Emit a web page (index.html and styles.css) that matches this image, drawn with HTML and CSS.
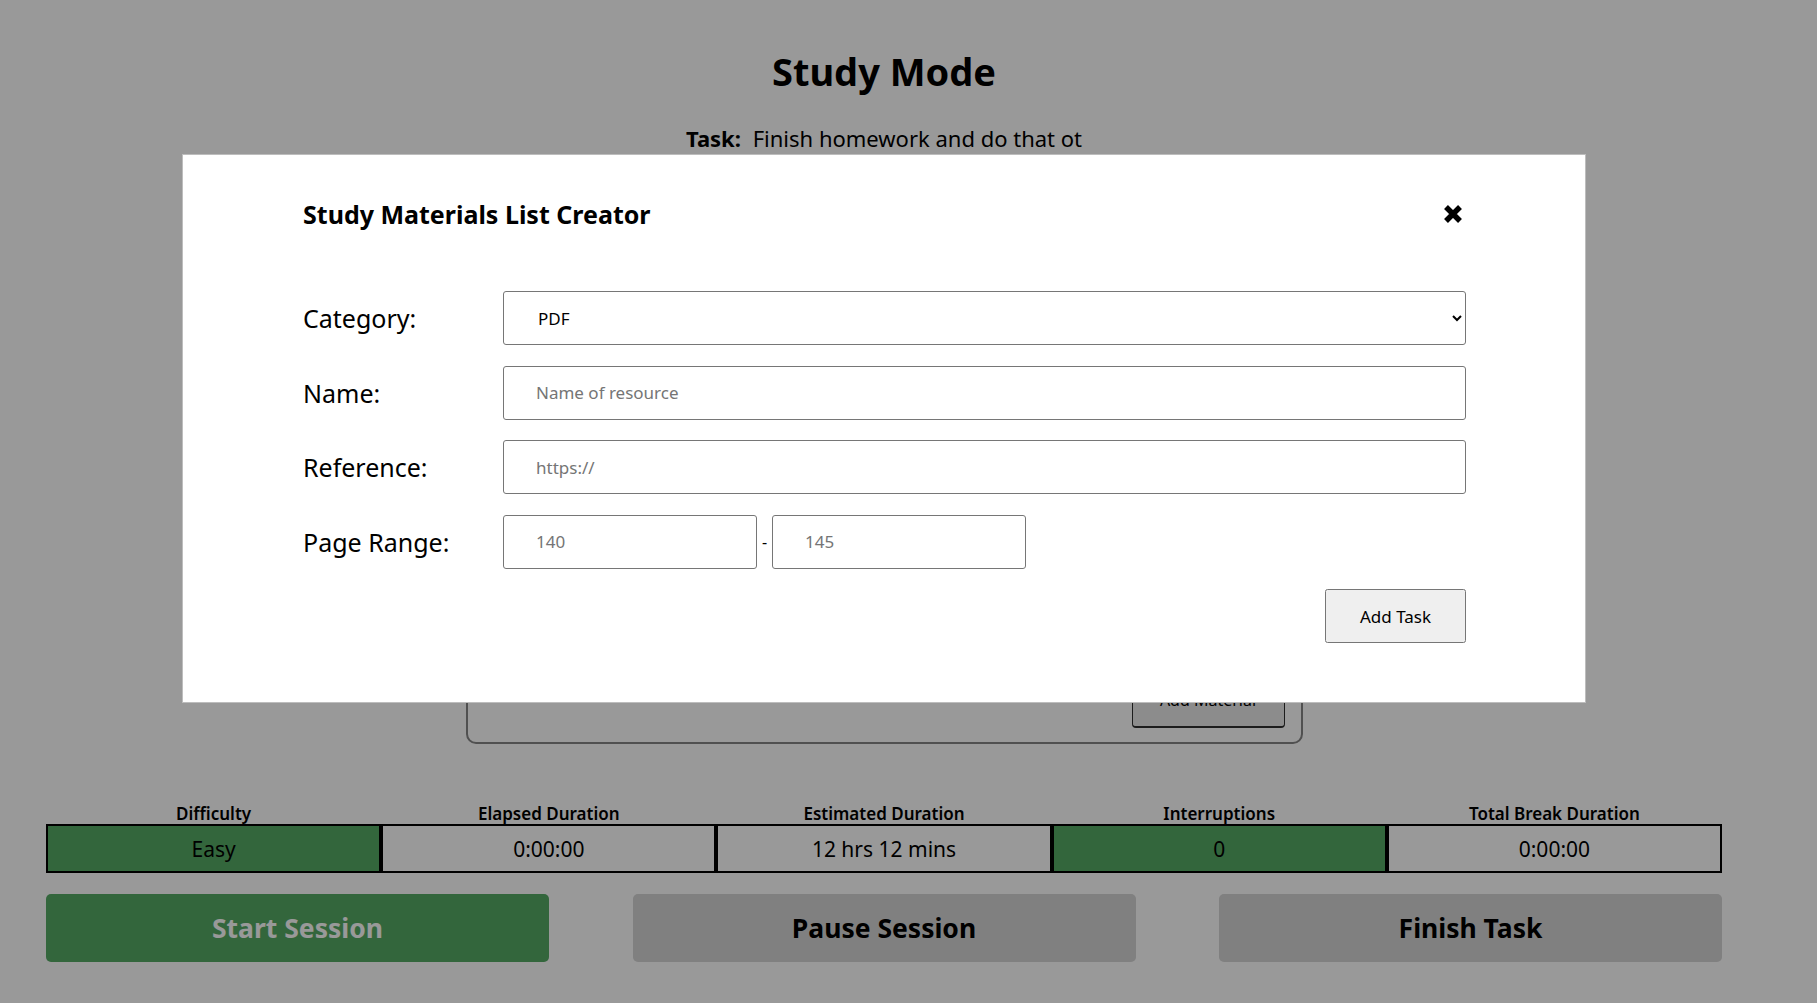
FILE: index.html
```html
<!DOCTYPE html>
<html lang="en">
<head>
<meta charset="utf-8">
<title>Study Mode</title>
<link rel="stylesheet" href="styles.css">
</head>
<body>
<div class="page">
  <h1 class="title">Study Mode</h1>
  <p class="task"><strong>Task:</strong> Finish homework and do that ot</p>
  <section class="materials">
    <div class="materials-actions">
      <button class="add-material" type="button">Add Material</button>
    </div>
  </section>
  <div class="stats">
    <div class="stat">
      <div class="stat-label">Difficulty</div>
      <div class="stat-value green">Easy</div>
    </div>
    <div class="stat">
      <div class="stat-label">Elapsed Duration</div>
      <div class="stat-value">0:00:00</div>
    </div>
    <div class="stat">
      <div class="stat-label">Estimated Duration</div>
      <div class="stat-value">12 hrs 12 mins</div>
    </div>
    <div class="stat">
      <div class="stat-label">Interruptions</div>
      <div class="stat-value green">0</div>
    </div>
    <div class="stat">
      <div class="stat-label">Total Break Duration</div>
      <div class="stat-value">0:00:00</div>
    </div>
  </div>
  <div class="actions">
    <button class="action start" type="button">Start Session</button>
    <button class="action" type="button">Pause Session</button>
    <button class="action" type="button">Finish Task</button>
  </div>
</div>

<div class="overlay"></div>
<div class="modal">
  <div class="modal-header">
    <h2 class="modal-title">Study Materials List Creator</h2>
    <button class="close" type="button" aria-label="Close">
      <svg width="20" height="20" viewBox="0 0 20 20"><path d="M3 3 L17 17 M17 3 L3 17" stroke="#000" stroke-width="5.5" fill="none"/></svg>
    </button>
  </div>
  <form class="modal-form">
    <div class="row">
      <label class="row-label">Category:</label>
      <select class="field">
        <option>PDF</option>
        <option>Video</option>
        <option>Website</option>
        <option>Book</option>
      </select>
    </div>
    <div class="row">
      <label class="row-label">Name:</label>
      <input class="field" type="text" placeholder="Name of resource">
    </div>
    <div class="row">
      <label class="row-label">Reference:</label>
      <input class="field" type="text" placeholder="https://">
    </div>
    <div class="row">
      <label class="row-label">Page Range:</label>
      <div class="range">
        <input class="field page" type="text" placeholder="140">
        <span class="dash">-</span>
        <input class="field page" type="text" placeholder="145">
      </div>
    </div>
    <div class="row submit-row">
      <button class="submit" type="button">Add Task</button>
    </div>
  </form>
</div>
</body>
</html>
```
FILE: styles.css
```css
html, body {
  margin: 0;
  padding: 0;
  background: #ffffff;
  font-family: "Noto Sans", "DejaVu Sans", sans-serif;
  color: #000;
}

.page {
  width: 1676px;
  margin-left: 46px;
}

.title {
  margin: 48px 0 0;
  font-size: 38px;
  line-height: 46px;
  font-weight: 700;
  text-align: center;
}

.task {
  margin: 30px 0 0;
  font-size: 22px;
  line-height: 28px;
  text-align: center;
}

.task strong {
  margin-right: 6px;
}

.materials {
  box-sizing: border-box;
  width: 837px;
  height: 572px;
  margin: 20px auto 0;
  border: 2px solid #858585;
  border-radius: 10px;
  padding: 14px 16px;
  display: flex;
  flex-direction: column;
  justify-content: flex-end;
}

.materials-actions {
  display: flex;
  justify-content: flex-end;
}

.add-material {
  box-sizing: border-box;
  width: 153px;
  height: 56px;
  background: #e9e9e9;
  border: 1px solid #303030;
  border-bottom-width: 2px;
  border-radius: 4px;
  font-family: inherit;
  font-size: 16px;
  color: #000;
}

.stats {
  display: grid;
  grid-template-columns: repeat(5, 1fr);
  margin-top: 60px;
}

.stat-label {
  font-size: 17px;
  line-height: 20px;
  font-weight: 600;
  text-align: center;
}

.stat-value {
  box-sizing: border-box;
  height: 49px;
  border: 2px solid #000;
  display: flex;
  align-items: center;
  justify-content: center;
  font-size: 21px;
}

.stat-value.green {
  background: #55aa65;
}

.actions {
  display: flex;
  justify-content: space-between;
  margin-top: 21px;
}

.action {
  width: 503px;
  height: 68px;
  border: none;
  border-radius: 5px;
  background: #d5d5d5;
  font-family: inherit;
  font-size: 26.5px;
  font-weight: 700;
  color: #000;
}

.action.start {
  background: #55aa65;
  color: #fff;
}

.overlay {
  position: fixed;
  inset: 0;
  background: rgba(0, 0, 0, 0.4);
}

.modal {
  position: fixed;
  left: 182px;
  top: 154px;
  box-sizing: border-box;
  width: 1404px;
  height: 549px;
  background: #fff;
  border: 1px solid #bdbdbd;
  padding: 44px 119px 0 120px;
}

.modal-header {
  display: flex;
  align-items: center;
  justify-content: space-between;
  height: 30px;
}

.modal-title {
  margin: 0;
  font-size: 25px;
  line-height: 30px;
  font-weight: 700;
}

.close {
  background: none;
  border: none;
  padding: 0;
  margin-right: 3px;
  display: flex;
}

.modal-form {
  margin-top: 62px;
  display: flex;
  flex-direction: column;
  gap: 20.5px;
}

.row {
  display: flex;
  align-items: center;
}

.row-label {
  width: 200px;
  flex: none;
  font-size: 25px;
}

.field {
  box-sizing: border-box;
  flex: 1 1 auto;
  min-width: 0;
  height: 54px;
  margin: 0;
  padding: 0 32px;
  font-family: inherit;
  font-size: 17px;
  color: #000;
  background: #fff;
  border: 1px solid #767676;
  border-radius: 3px;
}

.field::placeholder {
  color: #757575;
}

select.field {
  padding-left: 30px;
}

.range {
  display: flex;
  align-items: center;
}

.range .field.page {
  flex: 0 0 254px;
  width: 254px;
}

.dash {
  flex: 0 0 15px;
  text-align: center;
  font-size: 16px;
}

.submit-row {
  justify-content: flex-end;
}

.submit {
  width: 141px;
  height: 54px;
  font-family: inherit;
  font-size: 17px;
  color: #000;
}
```
